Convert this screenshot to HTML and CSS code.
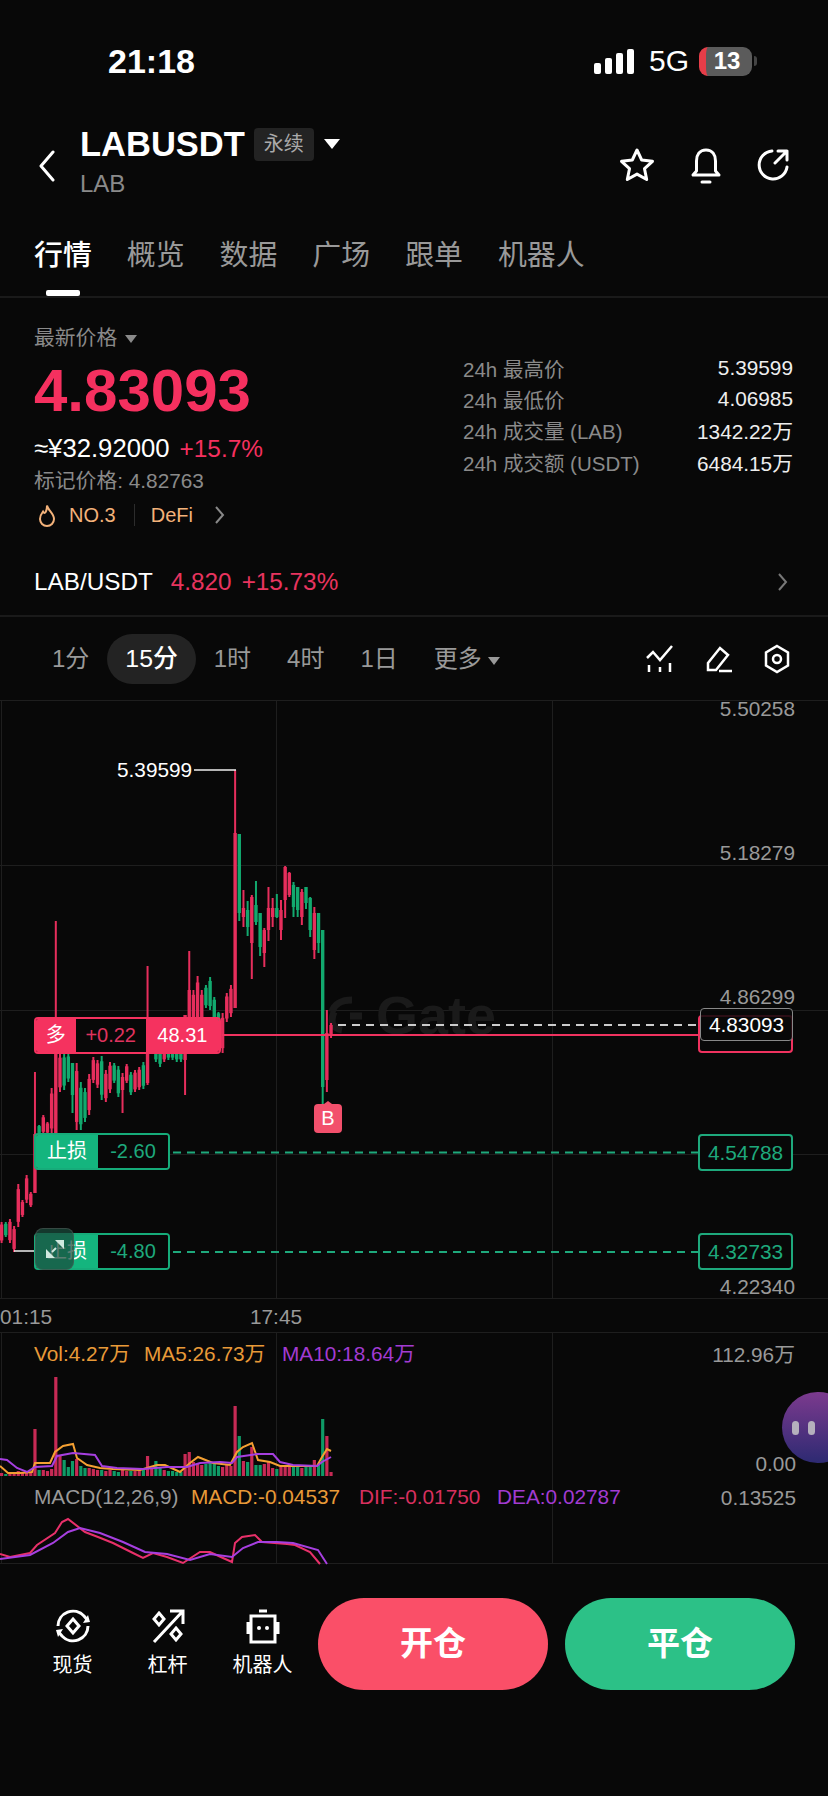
FILE: index.html
```html
<!DOCTYPE html>
<html lang="zh-CN">
<head>
    <meta charset="UTF-8">
    <meta name="viewport" content="width=device-width, initial-scale=1.0">
    <title>LABUSDT</title>
    <link rel="stylesheet" href="styles.css">
</head>
<body>
    <div class="status">
        <span class="time">21:18</span>
        <div class="status-right">
            <div class="signal"><i class="s1"></i><i class="s2"></i><i class="s3"></i><i class="s4"></i></div>
            <span class="net">5G</span>
            <div class="battery"><span>13</span></div>
            <div class="battery-nub"></div>
        </div>
    </div>

    <div class="header">
        <svg class="back" width="18" height="32" viewBox="0 0 18 32"><path d="M15 2 3 16l12 14"/></svg>
        <div class="title">
            <div class="title-top">
                <span class="symbol">LABUSDT</span>
                <span class="perp">永续</span>
                <span class="tri-white"></span>
            </div>
            <div class="subtitle">LAB</div>
        </div>
        <div class="header-icons">
            <svg width="36" height="36" viewBox="0 0 36 36"><path d="M18 3l4.700 10 10.800 1.300-8 7.400 2.200 10.800-9.700-5.400-9.700 5.400 2.200-10.800-8-7.400 10.800-1.300z"/></svg>
            <svg width="32" height="38" viewBox="0 0 32 38"><path d="M16 3C9.500 3 6.500 8 6.500 14v10l-3.500 4h26l-3.500-4V14C25.500 8 22.500 3 16 3zM12 35h8"/></svg>
            <svg width="34" height="34" viewBox="0 0 34 34"><path d="M15 4a14 14 0 1 0 15 16M18 16 30 4M21 4h9v9"/></svg>
        </div>
    </div>

    <div class="tabs">
        <span class="tab active">行情</span>
        <span class="tab">概览</span>
        <span class="tab">数据</span>
        <span class="tab">广场</span>
        <span class="tab">跟单</span>
        <span class="tab">机器人</span>
    </div>

    <div class="summary">
        <div class="summary-left">
            <div class="price-label">最新价格<span class="tri-grey"></span></div>
            <div class="price">4.83093</div>
            <div class="cny">≈¥32.92000<span class="up">+15.7%</span></div>
            <div class="mark">标记价格: 4.82763</div>
            <div class="rank">
                <svg width="18" height="23" viewBox="0 0 18 23"><path d="M9 1.500c1 5 7 8 7 13.500a7 7 0 0 1-14 0c0-3.500 1.500-5.500 3-7.500 .8 1.500 1.800 1.800 2.500 .8C8.500 6.500 9 4.500 9 1.500z"/></svg>
                <span class="rank-no">NO.3</span>
                <span class="rank-sep"></span>
                <span>DeFi</span>
                <svg class="rank-more" width="11" height="20" viewBox="0 0 11 20"><path d="M2 2l7 8-7 8"/></svg>
            </div>
        </div>
        <div class="stats">
            <div class="stat"><span>24h 最高价</span><b>5.39599</b></div>
            <div class="stat"><span>24h 最低价</span><b>4.06985</b></div>
            <div class="stat"><span>24h 成交量 (LAB)</span><b>1342.22万</b></div>
            <div class="stat"><span>24h 成交额 (USDT)</span><b>6484.15万</b></div>
        </div>
    </div>

    <div class="pair">
        <span class="pair-name">LAB/USDT</span>
        <span class="pair-price">4.820</span>
        <span class="pair-price">+15.73%</span>
        <svg width="11" height="20" viewBox="0 0 11 20"><path d="M2 2l7 8-7 8"/></svg>
    </div>

    <div class="periods">
        <span class="period">1分</span>
        <span class="period active">15分</span>
        <span class="period">1时</span>
        <span class="period">4时</span>
        <span class="period">1日</span>
        <span class="period">更多<span class="tri-small"></span></span>
        <div class="tools">
            <svg width="28" height="28" viewBox="0 0 28 28"><path d="M1 13l6-6 7 8L26 1M3 27v-7M14 27v-5M24 27v-9"/></svg>
            <svg width="28" height="28" viewBox="0 0 28 28"><path d="M3 18 15 3l8 7-12 15H3zM14 26h13"/></svg>
            <svg width="26" height="30" viewBox="0 0 26 30"><path d="M13 2l11 6.500v13L13 28 2 21.500v-13z"/><circle cx="13" cy="15" r="4"/></svg>
        </div>
    </div>

    <div class="chart">
        <svg class="plot" width="828" height="864" viewBox="0 700 828 864">
            <path class="grid" d="M0 700.500H828M0 865.500H828M0 1010.500H828M0 1154.500H828M0 1298.500H828M0 1332.500H828M0 1563.500H828M1.500 700V1298M276.500 700V1298M552.500 700V1298M1.500 1332V1564M276.500 1332V1564M552.500 1332V1564"/>

            <path class="mark-c" d="M334 1012c-4 10-2 16 8 18M352 1000c-10 0-18 4-20 12M350 1016h12"/>
            <text class="mark-t" x="376" y="1034">Gate</text>

            <g id="candles"></g>
            <g id="volume"></g>

            <polyline class="ma5" points="0,1466 8,1473 20,1473 32,1472 35,1463 50,1463 55,1452 63,1446 73,1444 77,1458 87,1465 100,1468 113,1469 140,1470 157,1465 165,1465 180,1472 190,1463 198,1457 213,1463 230,1465 237,1452 243,1447 252,1443 258,1460 270,1462 280,1466 293,1466 317,1466 322,1457 327,1449 331,1451"/>
            <polyline class="ma10" points="0,1459 7,1460 17,1468 27,1472 35,1467 52,1466 57,1456 73,1453 95,1455 102,1466 117,1468 143,1469 167,1467 187,1467 200,1463 220,1462 232,1463 237,1457 257,1454 273,1454 280,1462 293,1465 317,1466 322,1462 331,1457"/>

            <text class="leg orange" x="34" y="1361">Vol:4.27万</text>
            <text class="leg orange" x="144" y="1361">MA5:26.73万</text>
            <text class="leg purple" x="282" y="1361">MA10:18.64万</text>
            <text class="leg grey" x="34" y="1504">MACD(12,26,9)</text>
            <text class="leg orange" x="191" y="1504">MACD:-0.04537</text>
            <text class="leg pink" x="359" y="1504">DIF:-0.01750</text>
            <text class="leg purple" x="497" y="1504">DEA:0.02787</text>

            <polyline class="dif" points="0,1554 10,1557 30,1553 37,1545 55,1533 62,1522 68,1519 85,1532 98,1537 113,1543 133,1553 143,1558 153,1553 167,1557 183,1563 200,1552 210,1552 223,1558 232,1562 235,1543 242,1537 255,1535 262,1542 287,1544 295,1545 310,1552 320,1564"/>
            <polyline class="dea" points="0,1559 30,1555 53,1543 68,1532 80,1528 100,1533 123,1542 145,1552 167,1554 190,1560 210,1554 232,1557 243,1548 258,1542 277,1542 293,1543 318,1550 327,1564"/>

            <path class="low" d="M14 1251H34M194 770H236"/>
            <text class="leg white" x="117" y="777">5.39599</text>

            <path class="dash-white" d="M338 1025H698"/>
            <path class="pos-line" d="M222 1035H700"/>
            <path class="dash-green" d="M173 1152.500H698M173 1252H698"/>

            <text class="leg grey" x="795" y="716" text-anchor="end">5.50258</text>
            <text class="leg grey" x="795" y="860" text-anchor="end">5.18279</text>
            <text class="leg grey" x="795" y="1004" text-anchor="end">4.86299</text>
            <text class="leg grey" x="795" y="1294" text-anchor="end">4.22340</text>
            <text class="leg grey" x="0" y="1324">01:15</text>
            <text class="leg grey" x="276" y="1324" text-anchor="middle">17:45</text>
            <text class="leg grey" x="795" y="1362" text-anchor="end">112.96万</text>
            <text class="leg grey" x="796" y="1471" text-anchor="end">0.00</text>
            <text class="leg grey" x="796" y="1505" text-anchor="end">0.13525</text>
        </svg>

        <div class="order long">
            <span class="order-side">多</span>
            <span class="order-pnl">+0.22</span>
            <span class="order-side order-val">48.31</span>
        </div>
        <div class="order stop stop-a">
            <span class="order-side">止损</span>
            <span class="order-pnl">-2.60</span>
        </div>
        <div class="order stop stop-b">
            <span class="order-side">止损</span>
            <span class="order-pnl">-4.80</span>
        </div>

        <div class="px-box px-entry"></div>
        <div class="px-box px-last">4.83093</div>
        <div class="px-box px-stop px-stop-a">4.54788</div>
        <div class="px-box px-stop px-stop-b">4.32733</div>

        <div class="buy-mark">B</div>

        <div class="expand">
            <svg width="22" height="22" viewBox="0 0 22 22"><path d="M8 14l4-4"/><path class="solid" d="M11 2h9v9zM2 11l9 9H2z"/></svg>
        </div>

        <div class="bot"><i></i><i></i></div>
    </div>

    <div class="actions">
        <div class="action">
            <svg width="36" height="36" viewBox="0 0 36 36"><path d="M3 18a15 15 0 0 1 26-10l3 3.500M33 18a15 15 0 0 1-26 10l-3-3.500"/><path class="solid" d="M28 15l7-1-2-7zM8 21l-7 1 2 7z"/><path d="M18 11l6 7-6 7-6-7z"/></svg>
            <span>现货</span>
        </div>
        <div class="action">
            <svg width="36" height="36" viewBox="0 0 36 36"><path d="M4 34 32 4M20 3h13v13M9 5l5 6-5 6-5-6zM26 20l5 6-5 6-5-6z"/></svg>
            <span>杠杆</span>
        </div>
        <div class="action">
            <svg width="36" height="36" viewBox="0 0 36 36"><path d="M14 3h8M6 8h24v26H6zM3 14v12M33 14v12"/><circle class="solid" cx="14" cy="20" r="2"/><circle class="solid" cx="22" cy="20" r="2"/></svg>
            <span>机器人</span>
        </div>
        <div class="trade open">开仓</div>
        <div class="trade close">平仓</div>
    </div>

    <script src="chart.js"></script>
</body>
</html>
```

FILE: styles.css
```css
* {
    box-sizing: border-box;
}

body {
    margin: 0;
    width: 828px;
    height: 1796px;
    overflow: hidden;
    background-color: #080808;
    color: #fff;
    font-family: "Liberation Sans", "Noto Sans CJK SC", sans-serif;
}

/* status bar */
.status {
    height: 122px;
    display: flex;
    align-items: center;
    justify-content: space-between;
    padding: 0 71px 0 108px;
}

.time {
    font-size: 34px;
    font-weight: 700;
}

.status-right {
    display: flex;
    align-items: center;
}

.signal {
    display: flex;
    align-items: flex-end;
    gap: 4px;
    height: 25px;
    margin-right: 15px;
}

.signal i {
    display: block;
    width: 7px;
    background-color: #fff;
    border-radius: 2px;
}

.s1 { height: 11px; }
.s2 { height: 16px; }
.s3 { height: 21px; }
.s4 { height: 25px; }

.net {
    font-size: 30px;
    margin-right: 10px;
}

.battery {
    width: 53px;
    height: 29px;
    border-radius: 9px;
    border-left: 7px solid #e63d48;
    background-color: #5b5b5b;
    display: flex;
    align-items: center;
    justify-content: center;
    padding-right: 4px;
    font-size: 24px;
    font-weight: 700;
}

.battery-nub {
    width: 3px;
    height: 10px;
    margin-left: 2px;
    border-radius: 0 3px 3px 0;
    background-color: #444;
}

/* header */
.header {
    height: 90px;
    display: flex;
    position: relative;
    padding-left: 38px;
}

.header svg path {
    fill: none;
    stroke: #fff;
    stroke-width: 3;
    stroke-linejoin: round;
    stroke-linecap: round;
}

.back {
    margin-top: 28px;
}

.title {
    margin-left: 24px;
}

.title-top {
    display: flex;
    align-items: center;
    height: 44px;
}

.symbol {
    font-size: 34.500px;
    font-weight: 700;
}

.perp {
    width: 60px;
    height: 33px;
    margin-left: 9px;
    border-radius: 4px;
    background-color: #232323;
    color: #aaa;
    font-size: 20px;
    line-height: 33px;
    text-align: center;
}

.tri-white {
    width: 0;
    height: 0;
    margin-left: 10px;
    border-left: 8px solid transparent;
    border-right: 8px solid transparent;
    border-top: 10px solid #fff;
}

.subtitle {
    margin-top: 4px;
    color: #8a8a8a;
    font-size: 24px;
}

.header-icons {
    display: flex;
    align-items: flex-start;
    gap: 35px;
    margin-left: auto;
    padding: 25px 37px 0 0;
}

/* tabs */
.tabs {
    height: 86px;
    display: flex;
    gap: 35px;
    padding: 24px 0 0 34px;
    border-bottom: 2px solid #1a1a1a;
    position: relative;
}

.tab {
    color: #999;
    font-size: 28.900px;
    line-height: 38px;
}

.tab.active {
    color: #fff;
    font-weight: 500;
}

.tab.active::after {
    content: "";
    position: absolute;
    left: 46px;
    bottom: 0;
    width: 34px;
    height: 6px;
    border-radius: 2px;
    background-color: #fff;
}

/* price summary */
.summary {
    display: flex;
    justify-content: space-between;
    padding: 24px 35px 15px 34px;
    height: 253px;
}

.price-label {
    height: 32px;
    color: #8a8a8a;
    font-size: 20.800px;
    line-height: 32px;
}

.tri-grey {
    display: inline-block;
    margin-left: 8px;
    border-left: 6px solid transparent;
    border-right: 6px solid transparent;
    border-top: 8px solid #8a8a8a;
    vertical-align: 2px;
}

.price {
    height: 74px;
    color: #f5305f;
    font-size: 60px;
    font-weight: 700;
    line-height: 74px;
}

.cny {
    height: 40px;
    font-size: 25.700px;
    line-height: 40px;
}

.up {
    margin-left: 10px;
    color: #f5305f;
    font-size: 24.400px;
}

.mark {
    height: 26px;
    color: #8a8a8a;
    font-size: 20.800px;
    line-height: 26px;
}

.rank {
    height: 42px;
    display: flex;
    align-items: center;
    color: #f3b27a;
    font-size: 20px;
    padding-left: 4px;
}

.rank svg path {
    fill: none;
    stroke: #f3b27a;
    stroke-width: 2;
}

.rank-no {
    margin-left: 13px;
}

.rank-sep {
    width: 1px;
    height: 22px;
    margin: 0 16px 0 18px;
    background-color: #2c2c2c;
}

.rank svg.rank-more {
    margin-left: 21px;
}

.rank svg.rank-more path {
    stroke: #888;
}

.stats {
    width: 330px;
    margin-top: 30px;
}

.stat {
    height: 31.300px;
    display: flex;
    justify-content: space-between;
    align-items: center;
    color: #8a8a8a;
    font-size: 20.500px;
}

.stat b {
    color: #eee;
    font-weight: 400;
    font-size: 20.800px;
}

/* spot pair row */
.pair {
    height: 66px;
    display: flex;
    align-items: center;
    gap: 10px;
    padding: 0 40px 2px 34px;
    border-bottom: 2px solid #1a1a1a;
    font-size: 24.300px;
}

.pair-name {
    margin-right: 8px;
}

.pair-price {
    color: #e8345f;
}

.pair svg {
    margin-left: auto;
}

.pair svg path {
    fill: none;
    stroke: #777;
    stroke-width: 2;
}

/* interval row */
.periods {
    height: 83px;
    display: flex;
    align-items: center;
    padding: 0 38px 0 34px;
}

.period {
    height: 50px;
    padding: 0 18px;
    border-radius: 25px;
    color: #999;
    font-size: 24px;
    line-height: 50px;
}

.period.active {
    background-color: #232323;
    color: #fff;
    font-size: 24.800px;
    font-weight: 500;
}

.tri-small {
    display: inline-block;
    margin-left: 6px;
    border-left: 6px solid transparent;
    border-right: 6px solid transparent;
    border-top: 8px solid #999;
    vertical-align: 2px;
}

.tools {
    display: flex;
    align-items: center;
    gap: 31px;
    margin-left: auto;
}

.tools svg path,
.tools svg circle {
    fill: none;
    stroke: #fff;
    stroke-width: 2.500;
}

/* chart */
.chart {
    position: relative;
    height: 864px;
}

.plot {
    display: block;
    overflow: visible;
}

.plot polyline,
.plot path {
    fill: none;
}

.grid {
    stroke: #1e1e1e;
    stroke-width: 1;
}

.mark-c {
    stroke: #1a1a1a;
    stroke-width: 7;
}

.mark-t {
    fill: #1a1a1a;
    font-size: 54px;
    font-weight: 700;
}

.ma5 { stroke: #f4a032; stroke-width: 2; }
.ma10 { stroke: #a63fe0; stroke-width: 2; }
.dif { stroke: #e8306a; stroke-width: 2; }
.dea { stroke: #a63fe0; stroke-width: 2; }

.leg {
    font-size: 20.800px;
}

.orange { fill: #e89a38; }
.purple { fill: #a23bd2; }
.pink { fill: #d8305f; }
.grey { fill: #999; }
.white { fill: #fff; }

.low {
    stroke: #eee;
    stroke-width: 1.500;
}

.dash-white {
    stroke: #ccc;
    stroke-width: 2;
    stroke-dasharray: 8 6;
}

.pos-line {
    stroke: #f0325f;
    stroke-width: 2;
}

.dash-green {
    stroke: #1ea97c;
    stroke-width: 2;
    stroke-dasharray: 8 6;
}

/* order tags sitting on the chart */
.order {
    position: absolute;
    left: 34px;
    height: 37px;
    display: flex;
    border: 2px solid;
    border-radius: 4px;
    overflow: hidden;
    font-size: 20px;
    line-height: 33px;
    text-align: center;
}

.long {
    top: 317px;
    width: 187px;
    border-color: #f5325f;
}

.long .order-side {
    width: 40px;
    background-color: #f5325f;
}

.long .order-val {
    width: 74px;
}

.long .order-pnl {
    width: 71px;
    color: #e0335f;
}

.stop {
    width: 136px;
    border-color: #16ac7a;
}

.stop-a { top: 433px; }
.stop-b { top: 533px; }

.stop .order-side {
    width: 62px;
    background-color: #14b57e;
}

.stop .order-pnl {
    flex: 1;
    color: #1ea97c;
}

.order-pnl {
    background-color: #080808;
}

.px-box {
    position: absolute;
    left: 698px;
    width: 95px;
    height: 37px;
    border: 2px solid;
    border-radius: 4px;
    background-color: #080808;
    font-size: 20.800px;
    line-height: 33px;
    text-align: center;
}

.px-entry {
    top: 315px;
    height: 38px;
    border-color: #f0325f;
}

.px-last {
    top: 308px;
    left: 700px;
    width: 93px;
    height: 33px;
    border-width: 1px;
    border-color: #888;
    line-height: 31px;
    background-color: rgba(8, 8, 8, .85);
}

.px-stop {
    border-color: #1ea97c;
    color: #1ea97c;
}

.px-stop-a { top: 434px; }
.px-stop-b { top: 533px; }

.buy-mark {
    position: absolute;
    left: 314px;
    top: 404px;
    width: 28px;
    height: 29px;
    border-radius: 4px;
    background-color: #f2506c;
    font-size: 20px;
    line-height: 29px;
    text-align: center;
}

.buy-mark::before {
    content: "";
    position: absolute;
    left: 10px;
    top: -3px;
    border-left: 4px solid transparent;
    border-right: 4px solid transparent;
    border-bottom: 3px solid #f2506c;
}

.expand {
    position: absolute;
    left: 35px;
    top: 528px;
    width: 39px;
    height: 42px;
    display: flex;
    align-items: center;
    justify-content: center;
    border: 1px solid rgba(90, 90, 90, .5);
    border-radius: 8px;
    background-color: rgba(25, 75, 60, .72);
}

.expand path {
    fill: none;
    stroke: #cfe9df;
    stroke-width: 2;
}

.expand path.solid {
    fill: #cfe9df;
    stroke: none;
}

.bot {
    position: absolute;
    left: 782px;
    top: 692px;
    width: 72px;
    height: 71px;
    display: flex;
    gap: 9px;
    align-items: center;
    padding-left: 10px;
    border-radius: 36px;
    background: linear-gradient(#7c3a8e, #2d2a72);
}

.bot i {
    display: block;
    width: 7px;
    height: 14px;
    border-radius: 4px;
    background-color: #b5b0bd;
}

/* bottom bar */
.actions {
    height: 230px;
    display: flex;
    align-items: flex-start;
    padding: 34px 0 0 25px;
}

.action {
    width: 95px;
    display: flex;
    flex-direction: column;
    align-items: center;
    gap: 5px;
    padding-top: 10px;
    font-size: 20px;
}

.action svg path,
.action svg circle {
    fill: none;
    stroke: #fff;
    stroke-width: 3;
}

.action svg .solid {
    fill: #fff;
    stroke: none;
}

.trade {
    width: 230px;
    height: 92px;
    border-radius: 46px;
    font-size: 33px;
    font-weight: 700;
    line-height: 92px;
    text-align: center;
}

.open {
    margin-left: 8px;
    background-color: #fa4f68;
}

.close {
    margin-left: 17px;
    background-color: #2cc187;
}
```

FILE: chart.js
```js
// candles: colour, wick top, wick bottom, body top, body bottom (page y values)
const candles = [
    ['r', 1222, 1243], ['g', 1222, 1237], ['r', 1219, 1243], ['r', 1226, 1252],
    ['r', 1184, 1227], ['r', 1200, 1217], ['r', 1175, 1203], ['r', 1192, 1207],
    ['r', 1072, 1193, 1134, 1193], ['g', 1125, 1134], ['r', 1115, 1134], ['r', 1122, 1134],
    ['r', 1088, 1134], ['r', 921, 1133, 1053, 1133], ['r', 1053, 1092], ['g', 1053, 1090],
    ['g', 1053, 1082], ['g', 1063, 1113, 1063, 1095], ['r', 1063, 1130], ['g', 1082, 1130],
    ['g', 1088, 1122], ['r', 1074, 1115], ['r', 1057, 1083], ['r', 1060, 1088],
    ['g', 1056, 1100], ['r', 1070, 1102], ['r', 1062, 1093], ['g', 1063, 1083],
    ['g', 1066, 1097], ['r', 1073, 1113, 1077, 1090], ['r', 1064, 1083], ['g', 1072, 1095],
    ['r', 1070, 1092], ['r', 1067, 1090], ['g', 1062, 1089], ['r', 966, 1085, 1050, 1083],
    ['r', 1030, 1052], ['g', 1040, 1062], ['g', 1040, 1067], ['r', 1040, 1062],
    ['g', 1040, 1060], ['g', 1040, 1060], ['g', 1040, 1062], ['g', 1040, 1062],
    ['r', 1015, 1095, 1015, 1060], ['r', 951, 1030, 990, 1030], ['r', 990, 1030], ['r', 976, 1030],
    ['r', 990, 1030], ['g', 985, 1008], ['g', 977, 1010], ['g', 997, 1020],
    ['g', 1012, 1023], ['r', 1013, 1053], ['r', 993, 1022], ['r', 985, 1017],
    ['r', 770, 1008, 833, 1008], ['g', 834, 921, 834, 913], ['r', 890, 927, 908, 917], ['g', 901, 936, 910, 927],
    ['r', 895, 979, 897, 943], ['g', 881, 925, 905, 922], ['g', 913, 956, 913, 947], ['r', 928, 967, 930, 953],
    ['r', 887, 941, 908, 930], ['r', 898, 927, 908, 917], ['g', 894, 918, 908, 917], ['r', 900, 940, 910, 930],
    ['r', 866, 918, 867, 900], ['r', 872, 897, 873, 895], ['g', 882, 917, 885, 907], ['g', 887, 917, 887, 910],
    ['r', 889, 925, 892, 917], ['g', 887, 909, 887, 903], ['g', 897, 937, 898, 930], ['r', 907, 959, 913, 950],
    ['g', 913, 953, 913, 943], ['g', 930, 1105, 930, 1087], ['r', 1010, 1092, 1033, 1080], ['r', 1023, 1038, 1025, 1035]
];

// volume bar heights, same order as candles
const volumes = [
    3, 2, 4, 3, 5, 4, 3, 4, 47, 6, 6, 5, 7, 99, 20, 16, 9, 15, 17, 10,
    8, 8, 7, 6, 6, 5, 6, 5, 4, 6, 5, 5, 5, 6, 6, 20, 8, 15, 8, 6,
    5, 5, 4, 4, 22, 24, 14, 12, 11, 12, 13, 12, 10, 9, 11, 10, 70, 40, 15, 14,
    29, 11, 11, 12, 14, 8, 7, 9, 9, 9, 9, 9, 8, 9, 9, 16, 12, 57, 40, 4
];

const svgNs = 'http://www.w3.org/2000/svg';
const colors = { r: '#e62e5c', g: '#12a96e' };
const volColors = { r: '#c72a55', g: '#0f9a66' };
const candleGroup = document.getElementById('candles');
const volumeGroup = document.getElementById('volume');

const addRect = (group, x, y, w, h, fill) => {
    const rect = document.createElementNS(svgNs, 'rect');
    rect.setAttribute('x', x);
    rect.setAttribute('y', y);
    rect.setAttribute('width', w);
    rect.setAttribute('height', h);
    rect.setAttribute('fill', fill);
    group.appendChild(rect);
};

candles.forEach((c, i) => {
    const x = 1.6 + i * 4.17;
    const wickH = c[2] - c[1];
    const bodyTop = c[3] !== undefined ? c[3] : c[1] + wickH * 0.12;
    const bodyBot = c[4] !== undefined ? c[4] : c[2] - wickH * 0.12;
    addRect(candleGroup, x - 1, c[1], 2, wickH, colors[c[0]]);
    addRect(candleGroup, x - 1.7, bodyTop, 3.4, bodyBot - bodyTop, colors[c[0]]);
    addRect(volumeGroup, x - 1.6, 1476 - volumes[i], 3.2, volumes[i], volColors[c[0]]);
});
```
